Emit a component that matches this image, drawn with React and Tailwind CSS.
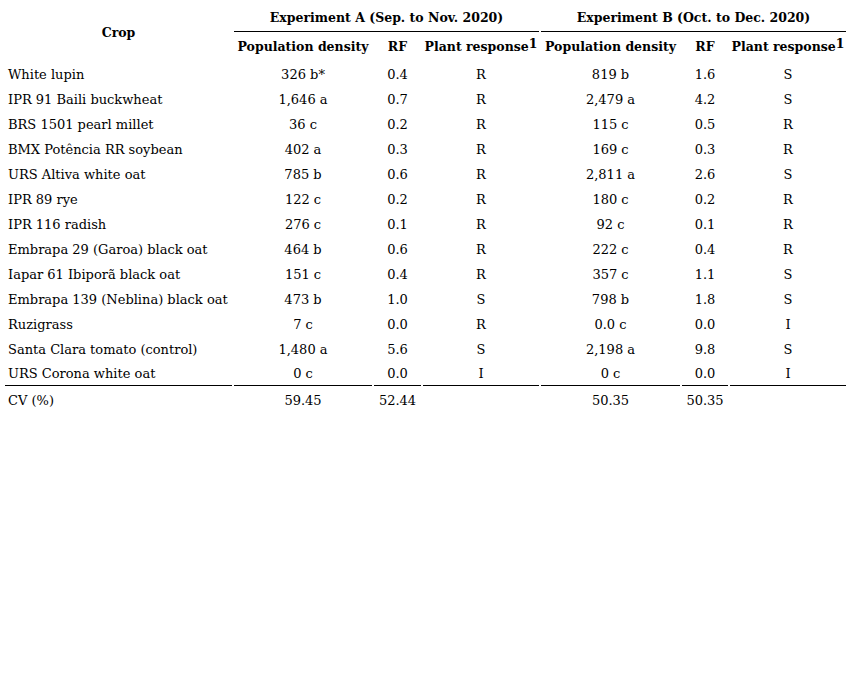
const rows = [
  ["White lupin", "326 b*", "0.4", "R", "819 b", "1.6", "S"],
  ["IPR 91 Baili buckwheat", "1,646 a", "0.7", "R", "2,479 a", "4.2", "S"],
  ["BRS 1501 pearl millet", "36 c", "0.2", "R", "115 c", "0.5", "R"],
  ["BMX Potência RR soybean", "402 a", "0.3", "R", "169 c", "0.3", "R"],
  ["URS Altiva white oat", "785 b", "0.6", "R", "2,811 a", "2.6", "S"],
  ["IPR 89 rye", "122 c", "0.2", "R", "180 c", "0.2", "R"],
  ["IPR 116 radish", "276 c", "0.1", "R", "92 c", "0.1", "R"],
  ["Embrapa 29 (Garoa) black oat", "464 b", "0.6", "R", "222 c", "0.4", "R"],
  ["Iapar 61 Ibiporã black oat", "151 c", "0.4", "R", "357 c", "1.1", "S"],
  ["Embrapa 139 (Neblina) black oat", "473 b", "1.0", "S", "798 b", "1.8", "S"],
  ["Ruzigrass", "7 c", "0.0", "R", "0.0 c", "0.0", "I"],
  ["Santa Clara tomato (control)", "1,480 a", "5.6", "S", "2,198 a", "9.8", "S"],
  ["URS Corona white oat", "0 c", "0.0", "I", "0 c", "0.0", "I"],
];

const Sup = () => <sup className="text-[12.5px] relative -top-[3px]">1</sup>;

export default function App() {
  const last = rows.length - 1;
  return (
    <div className="bg-white w-[851px] h-[688px] pl-[3px] pt-[3px] text-black" style={{ fontFamily: '"DejaVu Serif", serif' }}>
      <table className="table-fixed border-separate border-spacing-[2px] text-[13px]">
        <colgroup>
          <col className="w-[227px]" />
          <col className="w-[138px]" />
          <col className="w-[47px]" />
          <col className="w-[116px]" />
          <col className="w-[139px]" />
          <col className="w-[46px]" />
          <col className="w-[116px]" />
        </colgroup>
        <thead className="font-bold text-[12.5px]">
          <tr className="h-[27px]">
            <th rowSpan={2} className="p-0 text-center align-middle">Crop</th>
            <th colSpan={3} className="p-0 text-center border-b border-black">Experiment A (Sep. to Nov. 2020)</th>
            <th colSpan={3} className="p-0 text-center border-b border-black">Experiment B (Oct. to Dec. 2020)</th>
          </tr>
          <tr className="h-[27px]">
            <th className="p-0 text-center whitespace-nowrap">Population density</th>
            <th className="p-0 text-center">RF</th>
            <th className="p-0 text-center whitespace-nowrap">Plant response<Sup /></th>
            <th className="p-0 text-center whitespace-nowrap">Population density</th>
            <th className="p-0 text-center">RF</th>
            <th className="p-0 text-center whitespace-nowrap">Plant response<Sup /></th>
          </tr>
        </thead>
        <tbody className="font-light">
          {rows.map((r, i) => (
            <tr key={i} className="h-[23px]">
              {r.map((c, j) => (
                <td
                  key={j}
                  className={`p-0 whitespace-nowrap ${j === 0 ? "text-left pl-[3px]" : "text-center"} ${i === last ? "border-b border-black" : ""}`}
                >
                  {c}
                </td>
              ))}
            </tr>
          ))}
          <tr className="h-[26px]">
            <td className="p-0 pl-[3px] text-left">CV (%)</td>
            <td className="p-0 text-center">59.45</td>
            <td className="p-0 text-center">52.44</td>
            <td className="p-0"></td>
            <td className="p-0 text-center">50.35</td>
            <td className="p-0 text-center">50.35</td>
            <td className="p-0"></td>
          </tr>
        </tbody>
      </table>
    </div>
  );
}
